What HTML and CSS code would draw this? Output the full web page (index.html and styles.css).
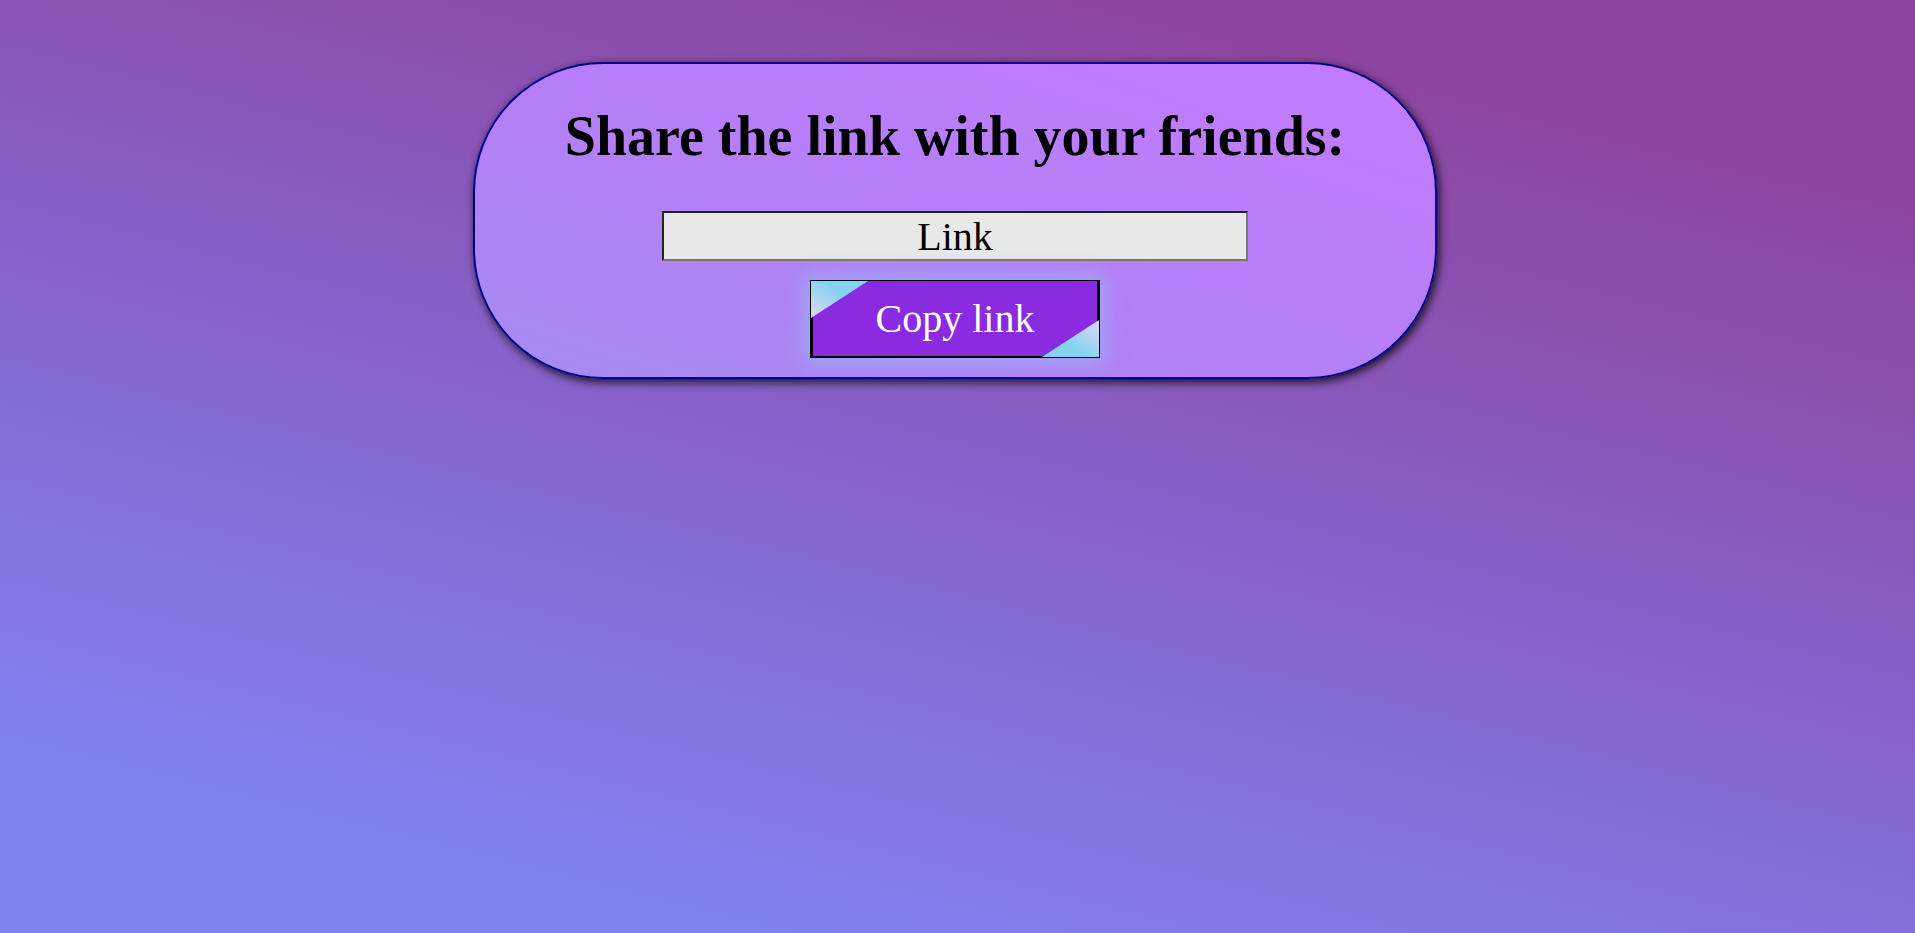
FILE: index.html
```html
<!DOCTYPE html>
<html lang="en">
<head>
<meta charset="utf-8">
<title>Share</title>
<link rel="stylesheet" href="styles.css">
</head>
<body>
  <main class="page">
    <section class="card">
      <h1 class="title">Share the link with your friends:</h1>
      <input class="link-input" type="text" value="Link" readonly>
      <button class="copy-btn" type="button"><span class="copy-label">Copy link</span></button>
    </section>
  </main>
</body>
</html>
```
FILE: styles.css
```css
html, body {
  margin: 0;
  padding: 0;
  height: 100%;
}
body {
  background: linear-gradient(14deg, #8080f0 13.5%, #8e44a0 86.5%);
  font-family: "Liberation Serif", "Times New Roman", serif;
  overflow: hidden;
}
.page {
  display: flex;
  justify-content: center;
  padding-top: 62px;
  padding-right: 5px;
}
.card {
  box-sizing: border-box;
  width: 964px;
  display: flex;
  flex-direction: column;
  align-items: center;
  padding: 40px 0 19px;
  border: 2px solid #00008b;
  border-radius: 130px;
  background: linear-gradient(to top right, #a58cf0 0%, #b47ff7 45%, #c47bff 100%);
  box-shadow: 2px 3px 10px rgba(0, 0, 0, 0.85);
}
.title {
  margin: 0;
  font-size: 56px;
  line-height: 64px;
  font-weight: bold;
  color: #000;
}
.link-input {
  box-sizing: border-box;
  margin-top: 43px;
  width: 586px;
  height: 50px;
  padding: 0;
  font-family: "Liberation Serif", "Times New Roman", serif;
  font-size: 40px;
  line-height: 46px;
  text-align: center;
  color: #000;
  background: #e8e8e8;
  border-style: solid;
  border-width: 2px;
  border-color: #222 #767676 #767676 #222;
  outline: none;
}
.copy-btn {
  position: relative;
  box-sizing: border-box;
  margin-top: 19px;
  width: 290px;
  height: 78px;
  padding: 0;
  border: 1px solid #000;
  background: #8a2be2;
  color: #fff;
  font-family: "Liberation Serif", "Times New Roman", serif;
  font-size: 40px;
  line-height: 46px;
  box-shadow: inset 2px 0 0 #000, inset -2px 0 0 #000, inset 0 -1px 0 #000, 0 0 18px 5px rgba(155, 178, 248, 0.8);
  cursor: pointer;
}
.copy-btn::before,
.copy-btn::after {
  content: "";
  position: absolute;
  width: 57px;
  height: 37px;
}
.copy-btn::before {
  top: 0;
  left: 0;
  clip-path: polygon(0 0, 100% 0, 0 100%);
  background: linear-gradient(to top right, #d0d6f3 10%, #86d3f0 60%);
}
.copy-btn::after {
  bottom: 0;
  right: 0;
  clip-path: polygon(100% 0, 100% 100%, 0 100%);
  background: linear-gradient(to bottom left, #d0d6f3 10%, #86d3f0 60%);
}
.copy-label {
  position: relative;
  z-index: 1;
}
```
